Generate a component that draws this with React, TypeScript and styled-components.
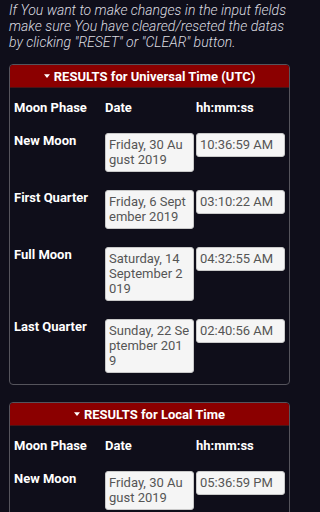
import React from 'react';
import styled, { createGlobalStyle } from 'styled-components';

const GlobalStyle = createGlobalStyle`
  html, body {
    margin: 0;
    padding: 0;
    background: #0f0e1a;
  }
  body {
    font-family: Roboto, 'Liberation Sans', sans-serif;
    color: #fff;
  }
`;

type Phase = { name: string; date: string; time: string };

const utcRows: Phase[] = [
    { name: 'New Moon', date: 'Friday, 30 August 2019', time: '10:36:59 AM' },
    { name: 'First Quarter', date: 'Friday, 6 September 2019', time: '03:10:22 AM' },
    { name: 'Full Moon', date: 'Saturday, 14 September 2019', time: '04:32:55 AM' },
    { name: 'Last Quarter', date: 'Sunday, 22 September 2019', time: '02:40:56 AM' },
];

const localRows: Phase[] = [
    { name: 'New Moon', date: 'Friday, 30 August 2019', time: '05:36:59 PM' },
];

const Result = ({ title, rows }: { title: string; rows: Phase[] }) => (
    <Panel>
        <PanelHeader>
            <Caret viewBox="0 0 8 5">
                <path d="M0 0 L8 0 L4 5 Z" fill="#fff" />
            </Caret>
            {title}
        </PanelHeader>
        <Table>
            <ColHead>Moon Phase</ColHead>
            <ColHead>Date</ColHead>
            <ColHead>hh:mm:ss</ColHead>
            {rows.map((r) => (
                <React.Fragment key={r.name}>
                    <Label>{r.name}</Label>
                    <Field>{r.date}</Field>
                    <Field>{r.time}</Field>
                </React.Fragment>
            ))}
        </Table>
    </Panel>
);

const App = () => {
    return (
        <Page>
            <GlobalStyle />
            <Note>
                If You want to make changes in the input fields make sure You have cleared/reseted the datas by clicking "RESET" or "CLEAR" button.
            </Note>
            <Result title="RESULTS for Universal Time (UTC)" rows={utcRows} />
            <Result title="RESULTS for Local Time" rows={localRows} />
        </Page>
    );
};

export default App;

const Page = styled.div`
  width: 299px;
  box-sizing: border-box;
  padding: 2px 9px 0 9px;
  overflow: hidden;
`;

const Note = styled.p`
  margin: 0 0 14px 0;
  font-style: italic;
  font-weight: 300;
  font-size: 14px;
  line-height: 16px;
  color: #dcdce0;
`;

const Panel = styled.section`
  border: 1px solid #55545c;
  border-radius: 4px;
  overflow: hidden;
  padding-bottom: 11px;

  & + & {
    margin-top: 17px;
  }
`;

const PanelHeader = styled.div`
  background: #8b0000;
  height: 22px;
  display: flex;
  align-items: center;
  justify-content: center;
  gap: 4px;
  font-weight: 700;
  font-size: 13px;
  color: #fff;
  border-bottom: 1px solid #4a1416;
`;

const Caret = styled.svg`
  width: 6px;
  height: 4px;
  margin-top: -1px;
`;

const Table = styled.div`
  display: grid;
  grid-template-columns: 1fr 89px 89px;
  column-gap: 2px;
  row-gap: 18px;
  padding: 12px 4px 0 4px;
  align-items: start;
`;

const ColHead = styled.div`
  font-weight: 700;
  font-size: 13px;
  line-height: 15px;
`;

const Label = styled.div`
  font-weight: 700;
  font-size: 13px;
  line-height: 15px;
`;

const Field = styled.div`
  background: #f5f5f5;
  border: 1px solid #c9c9c9;
  border-radius: 3px;
  padding: 3px 3.5px 4px 3px;
  font-size: 13px;
  line-height: 15px;
  color: #555;
  word-break: break-all;
`;
